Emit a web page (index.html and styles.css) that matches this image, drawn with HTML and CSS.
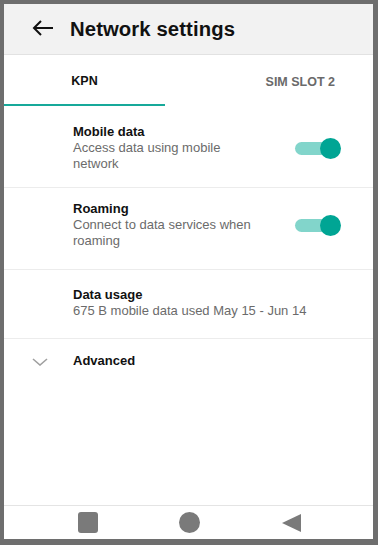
FILE: index.html
```html
<!DOCTYPE html>
<html>
<head>
<meta charset="utf-8">
<link rel="stylesheet" href="styles.css">
</head>
<body>
<div class="screen">
  <header class="appbar">
    <svg class="back" width="22" height="16" viewBox="0 0 22 16">
      <path d="M21 8H2M9 1L2 8l7 7" fill="none" stroke="#111" stroke-width="2"/>
    </svg>
    <h1 class="title">Network settings</h1>
  </header>
  <nav class="tabs">
    <div class="tab tab-active">KPN</div>
    <div class="tab tab-second">SIM SLOT 2</div>
  </nav>
  <main class="content">
    <div class="row row-first">
      <div class="text">
        <div class="label">Mobile data</div>
        <div class="sub">Access data using mobile<br>network</div>
      </div>
      <div class="switch"><span class="thumb"></span></div>
    </div>
    <div class="row row-second">
      <div class="text">
        <div class="label">Roaming</div>
        <div class="sub">Connect to data services when<br>roaming</div>
      </div>
      <div class="switch"><span class="thumb"></span></div>
    </div>
    <div class="row row-third">
      <div class="text">
        <div class="label">Data usage</div>
        <div class="sub">675 B mobile data used May 15 - Jun 14</div>
      </div>
    </div>
    <div class="row row-adv">
      <svg class="chev" width="16" height="8" viewBox="0 0 16 8">
        <path d="M1 1l7 6 7-6" fill="none" stroke="#a0a0a0" stroke-width="1.6"/>
      </svg>
      <div class="label">Advanced</div>
    </div>
  </main>
  <footer class="navbar">
    <span class="nav-square"></span>
    <span class="nav-circle"></span>
    <svg class="nav-back" width="19" height="18" viewBox="0 0 19 18">
      <path d="M19 0V18L0 9Z" fill="#7a7a7a"/>
    </svg>
  </footer>
</div>
</body>
</html>
```
FILE: styles.css
```css
html, body {
  margin: 0;
  padding: 0;
  background: #6e6e6e;
}
body {
  width: 378px;
  height: 545px;
  padding: 4px 5px 6px 4px;
  box-sizing: border-box;
  font-family: "Liberation Sans", Arial, sans-serif;
}
.screen {
  width: 369px;
  height: 535px;
  background: #fff;
  display: flex;
  flex-direction: column;
  overflow: hidden;
}
.appbar {
  flex: none;
  height: 51px;
  background: #f2f2f2;
  border-bottom: 1px solid #e2e2e2;
  display: flex;
  align-items: center;
  padding-left: 28px;
  box-sizing: border-box;
}
.back {
  margin-right: 16px;
  margin-top: -2px;
}
.title {
  margin: 0;
  font-size: 20.3px;
  font-weight: bold;
  color: #111;
  letter-spacing: 0.1px;
}
.tabs {
  display: flex;
  height: 51px;
  flex: none;
}
.tab {
  font-size: 12.5px;
  font-weight: bold;
  display: flex;
  align-items: center;
  padding-top: 2px;
  box-sizing: border-box;
}
.tab-active {
  width: 161px;
  justify-content: center;
  color: #111;
  border-bottom: 2px solid #17a99a;
}
.tab-second {
  flex: 1;
  justify-content: flex-end;
  padding-right: 38px;
  color: #6a6a6a;
}
.content {
  flex: 1;
}
.row {
  display: flex;
  align-items: center;
  padding-left: 69px;
  padding-right: 37px;
  border-bottom: 1px solid #ececec;
}
.row-first { padding-top: 18px; padding-bottom: 15px; }
.row-second { padding-top: 13px; padding-bottom: 20px; }
.row-third { padding-top: 17px; padding-bottom: 19px; }
.row-adv {
  border-bottom: none;
  padding-left: 28px;
  padding-top: 14px;
}
.text {
  flex: 1;
}
.label {
  font-size: 13px;
  line-height: 16px;
  font-weight: bold;
  color: #111;
}
.sub {
  font-size: 13px;
  line-height: 16px;
  color: #6b6b6b;
}
.chev {
  margin-right: 25px;
  margin-top: 1px;
}
.switch {
  position: relative;
  width: 41px;
  height: 13px;
  border-radius: 7px;
  background: #82d5cb;
}
.thumb {
  position: absolute;
  right: -5px;
  top: -4px;
  width: 21px;
  height: 21px;
  border-radius: 50%;
  background: #00a594;
}
.navbar {
  flex: none;
  height: 33px;
  border-top: 1px solid #e4e4e4;
  display: flex;
  align-items: center;
  padding-left: 74px;
}
.nav-square {
  width: 20px;
  height: 21px;
  border-radius: 3px;
  background: #7a7a7a;
  margin-right: 81px;
}
.nav-circle {
  width: 21px;
  height: 21px;
  border-radius: 50%;
  background: #7a7a7a;
  margin-right: 82px;
}
```
